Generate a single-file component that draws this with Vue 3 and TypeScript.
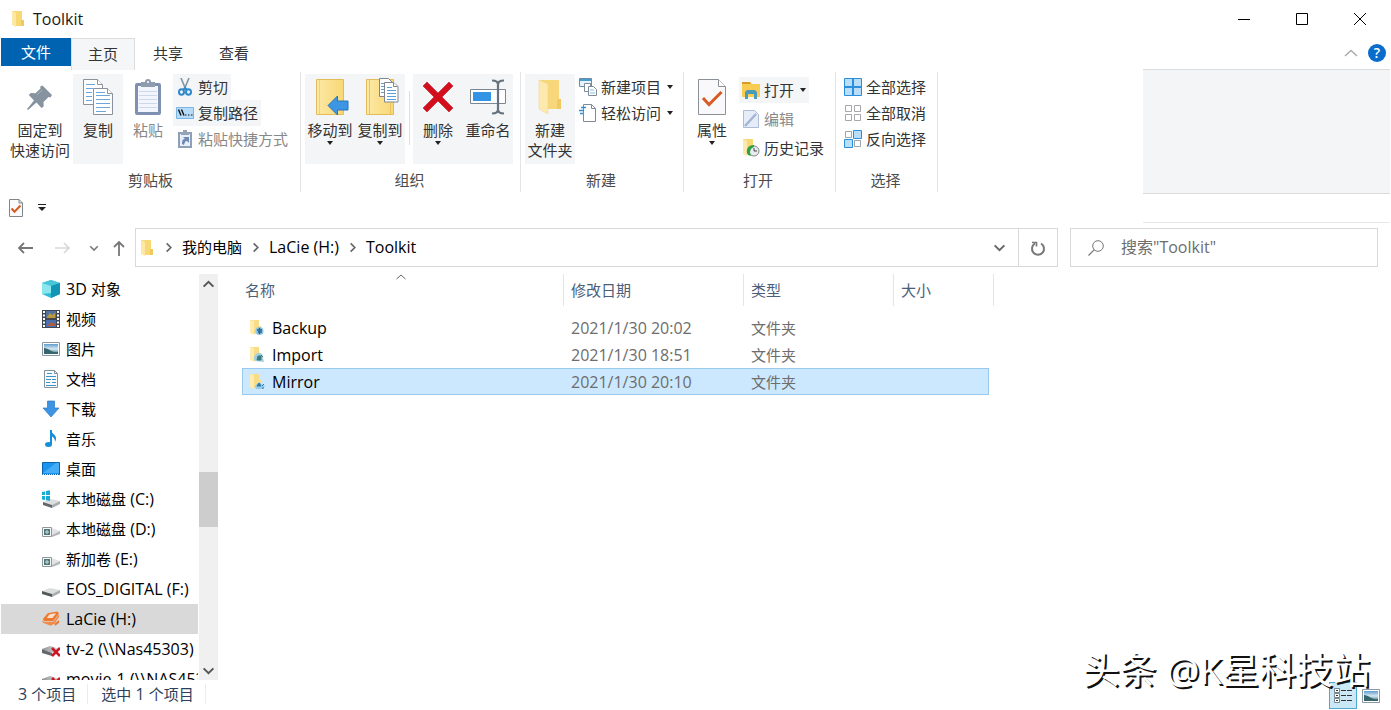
<script setup lang="ts">
import { ref } from 'vue'

interface Place { icon: string; name: string }
interface Row { name: string; date: string; kind: string; badge: string }

const tabs = ['共享', '查看']
const places: Place[] = [
  { icon: 'cube', name: '3D 对象' },
  { icon: 'film', name: '视频' },
  { icon: 'photo', name: '图片' },
  { icon: 'doc', name: '文档' },
  { icon: 'down', name: '下载' },
  { icon: 'music', name: '音乐' },
  { icon: 'desktop', name: '桌面' },
  { icon: 'disk-win', name: '本地磁盘 (C:)' },
  { icon: 'disk-lock', name: '本地磁盘 (D:)' },
  { icon: 'disk-lock', name: '新加卷 (E:)' },
  { icon: 'disk', name: 'EOS_DIGITAL (F:)' },
  { icon: 'lacie', name: 'LaCie (H:)' },
  { icon: 'disk-off', name: 'tv-2 (\\\\Nas45303)' },
  { icon: 'disk-off', name: 'movie-1 (\\\\NAS45303)' },
]
const currentPlace = ref(11)
const crumbs = ['我的电脑', 'LaCie (H:)', 'Toolkit']
const rows: Row[] = [
  { name: 'Backup', date: '2021/1/30 20:02', kind: '文件夹', badge: 'folder-a' },
  { name: 'Import', date: '2021/1/30 18:51', kind: '文件夹', badge: 'folder-b' },
  { name: 'Mirror', date: '2021/1/30 20:10', kind: '文件夹', badge: 'folder-c' },
]
const selected = ref(2)
const query = ref('')

// Splits a label into Chinese and Latin runs, which are set in different sizes.
const runs = (text: string) =>
  (text.match(/[\u2e80-\uffff]+|[^\u2e80-\uffff]+/g) ?? []).map((t) => ({ t, cjk: /[\u2e80-\uffff]/.test(t) }))
</script>

<template>
  <svg class="defs" aria-hidden="true">
    <defs>
      <linearGradient id="gold" x1="0" x2="1"><stop offset="0" stop-color="#fde9a5" /><stop offset="1" stop-color="#f8d775" /></linearGradient>
      <linearGradient id="sky" x1="0" y1="0" x2="0" y2="1"><stop offset="0" stop-color="#5f9dd0" /><stop offset=".5" stop-color="#d5e9f2" /><stop offset="1" stop-color="#2f6f7c" /></linearGradient>
      <linearGradient id="steel" x1="0" x2="1"><stop offset="0" stop-color="#8c8f91" /><stop offset="1" stop-color="#e2e4e5" /></linearGradient>
      <symbol id="folder" viewBox="0 0 16 18"><path d="M2 1h10v9h2v6H5z" fill="#f8d775" /><path d="M2 1l4 2v14l-4-2z" fill="#fde9a5" /><path d="M11 10h3v6h-3z" fill="#f2c95c" /></symbol>
      <symbol id="folder-a" viewBox="0 0 16 16"><path d="M1 0h9v6h2v8H4z" fill="#f9dc86" /><path d="M1 0l4 1v14l-4-2z" fill="#fdebb0" /><circle cx="10.500" cy="11" r="4" fill="#8cc5e6" /><path d="M8 10h5M9 12h4M10.500 8v6" stroke="#26658d" stroke-width="1.400" /></symbol>
      <symbol id="folder-b" viewBox="0 0 16 16"><path d="M1 0h9v6h2v8H4z" fill="#f9dc86" /><path d="M1 0l4 1v14l-4-2z" fill="#fdebb0" /><path d="M6 14a5 5 0 0 1 7-7l2 8z" fill="#a5d0df" /><path d="M9 9h3v4H8zM12 8l2 2" fill="#397a83" stroke="#397a83" /></symbol>
      <symbol id="folder-c" viewBox="0 0 16 16"><path d="M1 0h9v6h2v8H4z" fill="#f9dc86" /><path d="M1 0l4 1v14l-4-2z" fill="#fdebb0" /><path d="M6 12l4-4 6 4-2 3H7z" fill="#9bcbea" /><path d="M8 12l2-3 2 3zM13 12l2-2M13 14h2" fill="#2f7380" stroke="#2f7fae" /></symbol>
      <symbol id="pin" viewBox="0 0 28 28"><path d="M16.500 2.500L26 12l-1.500 2.500-2-.5-5 5 .2 4.500-2.200 1.500-5-5.500L2 27l-1-1 7-8.500L2.800 12l2-2 4.700.3 5-4.800-.3-2z" fill="#87939f" /><path d="M16 7l-5 5" stroke="#a8b2ba" /></symbol>
      <symbol id="copy" viewBox="0 0 32 38"><g fill="#fff" stroke="#8b929b"><path d="M1.500 1.500h14l5 5v20h-19z" /><path d="M15.500 1.500v5h5" /><path d="M11.500 10.500h14l5 5v21h-19z" /><path d="M25.500 10.500v5h5" /></g><path d="M4 6.500h9M4 10.500h7M4 14.500h6M4 18.500h6M4 22.500h6M14 17.500h14M14 21.500h14M14 25.500h14M14 29.500h14M14 33.500h10M14 14.500h9" stroke="#6da6d9" /></symbol>
      <symbol id="paste" viewBox="0 0 28 38"><rect x="1" y="5" width="26" height="32" rx="2" fill="#8090b0" /><path d="M4 8h20v26H4z" fill="#f2f5fb" /><path d="M5 13.500h18M5 17.500h18M5 21.500h18M5 25.500h18M5 29.500h18" stroke="#cbd7ec" /><path d="M7 4h4a3 3 0 0 1 6 0h4v5H7z" fill="#8f9cae" /><circle cx="14" cy="4" r="1" fill="#fff" /></symbol>
      <symbol id="cut" viewBox="0 0 16 18"><path d="M4 0l5 12M12 0L7 12" stroke="#8294a4" stroke-width="1.600" fill="none" /><g fill="none" stroke="#2e8acb" stroke-width="2"><ellipse cx="4.500" cy="14" rx="2.500" ry="2.800" /><ellipse cx="11.500" cy="14" rx="2.500" ry="2.800" /></g><path d="M6 12l2-2 2 2" fill="none" stroke="#2e8acb" stroke-width="2" /></symbol>
      <symbol id="path" viewBox="0 0 18 12"><path d="M.5.500h17v11H.5z" fill="#b6dbf8" stroke="#78b5e3" /><path d="M2.500 2.500l2.500 6M5.500 2.500l2.500 6" stroke="#111" stroke-width="1.400" /><path d="M9 8h1.500M12 8h1.500M15 8h1.500" stroke="#111" /></symbol>
      <symbol id="shortcut" viewBox="0 0 16 18"><path d="M2 3h12v14H2z" fill="#e9eff8" stroke="#8e9fb9" stroke-width="2" /><path d="M6 0h4v2h2v3H4V2h2z" fill="#95a3b5" /><path d="M5 14c0-4 1-5 3-5L6 7h6v6l-2-2c-2 0-2 1-3 4z" fill="#6e89b5" /></symbol>
      <symbol id="move" viewBox="0 0 34 38"><path d="M1.500 1.500h27v35h-27z" fill="url(#gold)" stroke="#e3bc58" /><path d="M4.500 2v34" stroke="#f0d27c" /><path d="M13 27.500L22.500 18v5H33v9H22.500v5z" fill="#3c96e4" stroke="#2774bd" /></symbol>
      <symbol id="copyto" viewBox="0 0 34 38"><path d="M1.500 1.500h27v35h-27z" fill="url(#gold)" stroke="#e3bc58" /><path d="M4.500 2v34M25.500 25v11" stroke="#e5c366" /><g fill="#fff" stroke="#7e8791"><path d="M14.500.500h9l4 4v14h-13z" /><path d="M19.500 4.500h9l4.500 4v15.500H19.500z" /><path d="M28.500 4.500v4h4" /></g><path d="M16 5.500h3M16 8.500h3M16 11.500h3M16 14.500h3M22 9.500h5M22 12.500h9M22 15.500h9M22 18.500h9M22 21.500h9" stroke="#5a9fd8" /></symbol>
      <symbol id="delete" viewBox="0 0 32 32"><path d="M1 5l4-4 11 11L27 1l4 4-11 11 11 11-4 4-11-11L5 31l-4-4 11-11z" fill="#d40f1d" stroke="#b50a17" stroke-width=".5" /></symbol>
      <symbol id="rename" viewBox="0 0 38 36"><path d="M1.500 10.500h35v14h-35z" fill="#fff" stroke="#7d8790" /><path d="M4 13h18v9H4z" fill="#3394e6" /><path d="M29 4v28M23 1.500c4 0 6 1 6 4 0-3 2-4 6-4M23 34.500c4 0 6-1 6-4 0 3 2 4 6 4" fill="none" stroke="#65717c" stroke-width="2.200" /></symbol>
      <symbol id="newfolder" viewBox="0 0 26 36"><path d="M2 1h20v19h2v10H8z" fill="#f7d77a" /><path d="M2 1l9 4v30l-9-5z" fill="#fde9ad" stroke="#f0d386" stroke-width=".5" /><path d="M20 20h4v10h-4z" fill="#f2c862" /></symbol>
      <symbol id="newitem" viewBox="0 0 18 18"><path d="M.5.500h12v8H.5z" fill="#e8f4fd" stroke="#6d8ca2" /><path d="M1 1h11v2H1z" fill="#4b9dc9" /><g fill="#fff" stroke="#7e8c97"><path d="M5.500 5.500h6v8h-6z" /><path d="M9.500 8.500h5l3 3v6h-8z" /></g><path d="M11 12h4M11 15h5" stroke="#8abbe5" /></symbol>
      <symbol id="access" viewBox="0 0 18 18"><path d="M4.500.500h8l4 4v13h-12z" fill="#fff" stroke="#818a93" /><path d="M12.500.500v4h4" fill="none" stroke="#818a93" /><path d="M2 3.500h5M0 6.500h5M1 9.500h3" stroke="#2e8cd3" stroke-width="1.500" /></symbol>
      <symbol id="props" viewBox="0 0 28 36"><path d="M.5.500h20l7 7v28H.5z" fill="#f9f9fb" stroke="#8b9097" /><path d="M20.500.500v7h7" fill="#fff" stroke="#8b9097" /><path d="M5 19l6 6.500L23.500 13" fill="none" stroke="#d85a25" stroke-width="3" /></symbol>
      <symbol id="open" viewBox="0 0 18 18"><path d="M0 1h8l2 2h8v13H0z" fill="#f8cc52" /><path d="M0 1h8l1 2H0z" fill="#d99b22" /><path d="M3 18v-7l2-2h8l2 2v7h-3v-5H6v5z" fill="#4b9bb8" /></symbol>
      <symbol id="edit" viewBox="0 0 18 18"><path d="M1.500.500h11l4 4v13h-15z" fill="#e6edf8" stroke="#aebdd6" /><path d="M3 16L14 4" stroke="#a3b6d3" stroke-width="2.500" /></symbol>
      <symbol id="history" viewBox="0 0 18 18"><path d="M1 0h10v15H4z" fill="#f8d775" /><path d="M1 0l4 2v15l-4-2z" fill="#fde9ad" /><circle cx="12" cy="12" r="5" fill="#e9ecee" stroke="#7f898f" /><path d="M12 9v3h3" fill="none" stroke="#444" /><path d="M12 6c-6 0-9 5-6 10l3 1-1-3c0-3 1-5 4-6z" fill="#2fa044" /></symbol>
      <symbol id="all" viewBox="0 0 18 18"><path d="M.5.500h17v17H.5z" fill="#b9def9" stroke="#2d8fdc" /><path d="M9 0v18M0 9h18" stroke="#2d8fdc" stroke-width="2" /></symbol>
      <symbol id="none" viewBox="0 0 18 18"><path d="M1.500 1.500h6v6h-6zM10.500 1.500h6v6h-6zM1.500 10.500h6v6h-6zM10.500 10.500h6v6h-6z" fill="#fff" stroke="#a5a7aa" /></symbol>
      <symbol id="invert" viewBox="0 0 18 18"><path d="M1.500 1.500h6v6h-6zM10.500 10.500h6v6h-6z" fill="#fff" stroke="#9aa4ab" /><path d="M9.500.500h8v8h-8zM.5 9.500h8v8h-8z" fill="#b9def9" stroke="#2d8fdc" /></symbol>
      <symbol id="cube" viewBox="0 0 18 18"><path d="M0 3l9-3 9 3v11l-9 4-9-4z" fill="#30bcd4" /><path d="M0 3l9-3 9 3-9 3z" fill="#48c6d8" /><path d="M9 6l9-3v11l-9 4z" fill="#1294b5" /><path d="M0 3l9 3v7l-9 1z" fill="#8ce6ee" /></symbol>
      <symbol id="film" viewBox="0 0 18 18"><path d="M0 0h18v18H0z" fill="#424650" /><path d="M4 1h10v7H4z" fill="#5272a4" /><path d="M4 10h10v7H4z" fill="#486fae" /><path d="M5 7l3-4 2 2 3-2v5H5z" fill="#b99a3f" /><path d="M5 16l4-4 4 2v2z" fill="#b05c45" /><path d="M2 1v16M16 1v16" stroke="#fff" stroke-width="2" stroke-dasharray="2 1.500" /></symbol>
      <symbol id="photo" viewBox="0 0 18 14"><path d="M.5.500h17v13H.5z" fill="#fff" stroke="#8a98a4" /><path d="M2 2h14v10H2z" fill="url(#sky)" /><path d="M2 6c5 0 7 5 14 4v2H2z" fill="#37656d" /></symbol>
      <symbol id="doc" viewBox="0 0 18 18"><path d="M2.500.500h10l3 3v14h-13z" fill="#f7fbfd" stroke="#84929c" /><path d="M12.500.500v3h3" fill="none" stroke="#84929c" /><path d="M4 6.500h10M4 9.500h5M10 9.500h4M4 12.500h4M10 12.500h4M4 15.500h10M5 3.500h5" stroke="#3c94c6" stroke-width="1.200" /></symbol>
      <symbol id="down" viewBox="0 0 18 18"><path d="M5.500 1h7v7H17l-8 9-8-9h4.500z" fill="#3d94e4" stroke="#2c78be" stroke-width=".7" /></symbol>
      <symbol id="music" viewBox="0 0 18 18"><path d="M9 0v14" stroke="#168fd8" stroke-width="2" /><ellipse cx="6.500" cy="14.500" rx="3.500" ry="2.500" fill="#168fd8" /><path d="M9 0c0 4 8 5 4 12 0-4-2-5-4-6z" fill="#168fd8" /></symbol>
      <symbol id="desktop" viewBox="0 0 18 14"><path d="M.5.500h17v12H.5z" fill="#1b94ef" stroke="#0b65ae" /><path d="M1 11L14 1h3v10z" fill="#45acf6" /><path d="M1 12.500h16" stroke="#bfe3ff" stroke-dasharray="1 1" /></symbol>
      <symbol id="disk" viewBox="0 0 18 18"><path d="M0 11l8-3 10 2-8 4z" fill="#dddfdf" /><path d="M0 11l10 3v3L0 14z" fill="#53585a" /><path d="M10 14l8-4v3l-8 4z" fill="#a9adae" /></symbol>
      <symbol id="disk-win" viewBox="0 0 18 18"><path d="M1 12l8-3 9 2-8 4z" fill="#dddfdf" /><path d="M1 12l9 3v3l-9-3z" fill="#61676a" /><path d="M10 15l8-4v3l-8 4z" fill="#a9adae" /><path d="M0 2l3-.5V5H0zM4 1l4-.7V5H4zM0 6h3v4L0 9.500zM4 6h4v5l-4-.7z" fill="#18acd4" /></symbol>
      <symbol id="disk-lock" viewBox="0 0 18 18"><path d="M3 11l7-3 8 3-8 4z" fill="#e2e4e5" /><path d="M10 15l8-4v3l-8 3z" fill="#b5b8ba" /><path d="M.5 7.500h9v9h-9z" fill="#f6f8f8" stroke="#8e979b" /><path d="M2 9h6v6H2z" fill="#517779" /><path d="M3 12h4M5 10v4" stroke="#c5e3e0" /></symbol>
      <symbol id="lacie" viewBox="0 0 19 18"><path d="M1 9l5-6 10-2 2 2-6 8H2z" fill="#ee7830" /><path d="M5 8l3-4 7-1-4 5z" fill="#ffe1cb" /><path d="M0 10l2 2h10l6-8v3l-5 7-4 2-8-3z" fill="#f28b49" /><path d="M13 14l5-4v3l-4 3z" fill="#ee7830" /></symbol>
      <symbol id="disk-off" viewBox="0 0 18 18"><path d="M0 9l8-3 10 3-8 4z" fill="url(#steel)" /><path d="M0 9l10 4v3L0 13z" fill="#62686b" /><path d="M10 8l8 8M18 8l-8 8" stroke="#cd1726" stroke-width="2.600" /></symbol>
      <symbol id="caret" viewBox="0 0 6 4"><path d="M0 0h6L3 4z" fill="#222" /></symbol>
      <symbol id="chev" viewBox="0 0 12 12"><path d="M1.500 4L6 8.500 10.500 4" fill="none" stroke="currentColor" stroke-width="1.800" /></symbol>
    </defs>
  </svg>

  <div class="window">
    <header class="title">
      <svg class="i16"><use href="#folder" /></svg>
      <h1>Toolkit</h1>
      <div class="sysbuttons">
        <button aria-label="最小化"><svg viewBox="0 0 12 12"><path d="M0 6.500h12" stroke="#000" /></svg></button>
        <button aria-label="最大化"><svg viewBox="0 0 12 12"><path d="M.5.500h11v11H.5z" fill="none" stroke="#000" /></svg></button>
        <button aria-label="关闭"><svg viewBox="0 0 12 12"><path d="M0 0l12 12M12 0L0 12" stroke="#000" /></svg></button>
      </div>
    </header>

    <nav class="tabs">
      <button class="file">文件</button>
      <button class="tab on">主页</button>
      <button v-for="t in tabs" :key="t" class="tab">{{ t }}</button>
      <div class="tabs-end">
        <button aria-label="折叠功能区"><svg width="14" height="8" viewBox="0 0 14 8"><path d="M1 7l6-5.500L13 7" fill="none" stroke="#aaa" stroke-width="1.400" /></svg></button>
        <button class="help" aria-label="帮助">?</button>
      </div>
    </nav>

    <section class="ribbon">
      <div class="group clip">
        <div class="tools">
          <button class="big wide"><span class="pic"><svg width="28" height="28"><use href="#pin" /></svg></span><span>固定到</span><span>快速访问</span></button>
          <button class="big tint"><span class="pic"><svg width="32" height="38"><use href="#copy" /></svg></span><span>复制</span></button>
          <button class="big off"><span class="pic"><svg width="28" height="38"><use href="#paste" /></svg></span><span>粘贴</span></button>
          <div class="stack">
            <button class="small tint"><svg width="16" height="18"><use href="#cut" /></svg>剪切</button>
            <button class="small tint"><svg width="18" height="12"><use href="#path" /></svg>复制路径</button>
            <button class="small off"><svg width="16" height="18"><use href="#shortcut" /></svg>粘贴快捷方式</button>
          </div>
        </div>
        <div class="caption">剪贴板</div>
      </div>
      <div class="group org">
        <div class="tools">
          <button class="big tint"><span class="pic shift"><svg width="34" height="38"><use href="#move" /></svg></span><span>移动到</span><svg class="caret"><use href="#caret" /></svg></button>
          <button class="big tint"><span class="pic shift"><svg width="34" height="38"><use href="#copyto" /></svg></span><span>复制到</span><svg class="caret"><use href="#caret" /></svg></button>
          <i class="split"></i>
          <button class="big tint"><span class="pic"><svg width="32" height="32"><use href="#delete" /></svg></span><span>删除</span><svg class="caret"><use href="#caret" /></svg></button>
          <button class="big tint"><span class="pic"><svg width="38" height="36"><use href="#rename" /></svg></span><span>重命名</span></button>
        </div>
        <div class="caption">组织</div>
      </div>
      <div class="group make">
        <div class="tools">
          <button class="big tint"><span class="pic"><svg width="26" height="36"><use href="#newfolder" /></svg></span><span>新建</span><span>文件夹</span></button>
          <div class="stack">
            <button class="small"><svg width="18" height="18"><use href="#newitem" /></svg>新建项目<svg class="caret"><use href="#caret" /></svg></button>
            <button class="small"><svg width="18" height="18"><use href="#access" /></svg>轻松访问<svg class="caret"><use href="#caret" /></svg></button>
          </div>
        </div>
        <div class="caption">新建</div>
      </div>
      <div class="group view">
        <div class="tools">
          <button class="big"><span class="pic"><svg width="28" height="36"><use href="#props" /></svg></span><span>属性</span><svg class="caret"><use href="#caret" /></svg></button>
          <div class="stack loose">
            <button class="small tint"><svg width="18" height="18"><use href="#open" /></svg>打开<svg class="caret"><use href="#caret" /></svg></button>
            <button class="small off"><svg width="18" height="18"><use href="#edit" /></svg>编辑</button>
            <button class="small"><svg width="18" height="18"><use href="#history" /></svg>历史记录</button>
          </div>
        </div>
        <div class="caption">打开</div>
      </div>
      <div class="group pick">
        <div class="tools">
          <div class="stack">
            <button class="small"><svg width="18" height="18"><use href="#all" /></svg>全部选择</button>
            <button class="small"><svg width="18" height="18"><use href="#none" /></svg>全部取消</button>
            <button class="small"><svg width="18" height="18"><use href="#invert" /></svg>反向选择</button>
          </div>
        </div>
        <div class="caption">选择</div>
      </div>
      <div class="blank"></div>
    </section>

    <div class="quick">
      <button aria-label="属性"><svg width="14" height="18" viewBox="0 0 28 36"><path d="M1 1h19l7 7v27H1z" fill="#fafafa" stroke="#7f858c" stroke-width="2" /><path d="M20 1v7h7" fill="none" stroke="#7f858c" stroke-width="2" /><path d="M5 19l6 6.500L23 13" fill="none" stroke="#d85a25" stroke-width="4" /></svg></button>
      <button aria-label="自定义快速访问工具栏"><svg width="8" height="7" viewBox="0 0 8 7"><path d="M0 .5h8" stroke="#222" /><path d="M0 3h8L4 7z" fill="#222" /></svg></button>
      <div class="rule"></div>
    </div>

    <div class="address">
      <div class="history">
        <button aria-label="后退"><svg width="16" height="14" viewBox="0 0 16 14"><path d="M16 7H2M7 2L2 7l5 5" fill="none" stroke="#777" stroke-width="1.800" /></svg></button>
        <button aria-label="前进" disabled><svg width="16" height="14" viewBox="0 0 16 14"><path d="M0 7h14M9 2l5 5-5 5" fill="none" stroke="#d8d8d8" stroke-width="1.600" /></svg></button>
        <button aria-label="最近浏览的位置"><svg width="10" height="10"><use href="#chev" /></svg></button>
        <button aria-label="上移"><svg width="14" height="16" viewBox="0 0 14 16"><path d="M7 16V2M2 7l5-5 5 5" fill="none" stroke="#777" stroke-width="1.800" /></svg></button>
      </div>
      <div class="path">
        <svg class="i16"><use href="#folder" /></svg>
        <template v-for="c in crumbs" :key="c">
          <svg class="sep"><use href="#chev" /></svg>
          <button class="crumb"><span v-for="r in runs(c)" :key="r.t" :class="{ cjk: r.cjk }">{{ r.t }}</span></button>
        </template>
        <button class="drop" aria-label="以前的位置"><svg width="13" height="13"><use href="#chev" /></svg></button>
        <button class="reload" aria-label="刷新"><svg width="16" height="16" viewBox="0 0 16 16"><path d="M11 3.500A6 6 0 1 1 5 3.500" fill="none" stroke="#777" stroke-width="2" /><path d="M6.500 6.500v-4H2" fill="none" stroke="#777" stroke-width="1.600" /></svg></button>
      </div>
      <label class="search">
        <svg width="16" height="16" viewBox="0 0 16 16"><circle cx="10" cy="6" r="5.300" fill="none" stroke="#777" /><path d="M6.300 9.700L.5 15.500" stroke="#777" stroke-width="1.200" /></svg>
        <input v-model="query" type="search" placeholder="搜索&quot;Toolkit&quot;" aria-label="搜索 Toolkit" />
      </label>
    </div>

    <main class="body">
      <nav class="side">
        <ul>
          <li v-for="(p, i) in places" :key="p.name">
            <button :class="{ on: i === currentPlace }" @click="currentPlace = i">
              <svg class="i18"><use :href="'#' + p.icon" /></svg>
              <span><span v-for="r in runs(p.name)" :key="r.t" :class="{ cjk: r.cjk }">{{ r.t }}</span></span>
            </button>
          </li>
        </ul>
        <div class="scroll">
          <button aria-label="向上滚动"><svg class="flip" width="13" height="13"><use href="#chev" /></svg></button>
          <div class="track"><div class="thumb"></div></div>
          <button aria-label="向下滚动"><svg width="13" height="13"><use href="#chev" /></svg></button>
        </div>
      </nav>
      <section class="files">
        <table>
          <colgroup><col class="c1" /><col class="c2" /><col class="c3" /><col class="c4" /><col class="c5" /></colgroup>
          <thead>
            <tr>
              <th><div>名称<svg class="sort" viewBox="0 0 10 6"><path d="M.5 5L5 1l4.500 4" fill="none" stroke="#666" /></svg></div></th>
              <th><div>修改日期</div></th>
              <th><div>类型</div></th>
              <th colspan="2"><div>大小</div></th>
            </tr>
          </thead>
          <tbody>
            <tr v-for="(r, i) in rows" :key="r.name" :class="{ on: i === selected }" @click="selected = i">
              <td><div class="name"><svg class="i16"><use :href="'#' + r.badge" /></svg>{{ r.name }}</div></td>
              <td>{{ r.date }}</td>
              <td class="cjk">{{ r.kind }}</td>
              <td></td>
            </tr>
          </tbody>
        </table>
      </section>
    </main>

    <footer class="status">
      <span class="count"><span v-for="(r, i) in runs('3 个项目')" :key="i" :class="{ cjk: r.cjk }">{{ r.t }}</span></span>
      <span class="count"><span v-for="(r, i) in runs('选中 1 个项目')" :key="i" :class="{ cjk: r.cjk }">{{ r.t }}</span></span>
      <div class="modes">
        <button class="on" aria-label="详细信息"><svg width="20" height="18" viewBox="0 0 20 18"><g fill="#fff" stroke="#77858e"><path d="M1.500 1.500h5v4h-5zM1.500 6.500h5v4h-5zM1.500 11.500h5v4h-5z" /></g><path d="M3 3.500h2M3 8.500h2M3 13.500h2M8 3.500h5M14 3.500h5M8 8.500h5M14 8.500h5M8 13.500h5M14 13.500h5" stroke="#333" /></svg></button>
        <button aria-label="大缩略图"><svg width="18" height="14"><use href="#photo" /></svg></button>
      </div>
    </footer>
    <div class="mark">头条 @K星科技站</div>
  </div>
</template>

<style>
html, body { margin: 0; background: #fff; }
</style>

<style scoped>
* { box-sizing: border-box; }
.defs { position: absolute; width: 0; height: 0; }
.window { position: relative; height: 100vh; display: flex; flex-direction: column; overflow: hidden; background: #fff; color: #1a1a1a; font: 16px/20px "Open Sans", "Noto Sans CJK SC", sans-serif; }
button { display: flex; align-items: center; justify-content: center; border: 0; padding: 0; margin: 0; background: none; color: inherit; font: inherit; white-space: nowrap; }
svg { flex: none; display: block; }
.cjk { font-size: 15px; }
.i16 { width: 16px; height: 18px; }
.i18 { width: 18px; height: 18px; }
.caret { width: 6px; height: 4px; }

.title { height: 38px; display: flex; align-items: center; padding-left: 10px; }
.title h1 { margin: 0 0 0 7px; font: inherit; }
.sysbuttons { margin: 0 2px 0 auto; display: flex; }
.sysbuttons button { width: 58px; height: 38px; }
.sysbuttons svg { width: 12px; height: 12px; }

.tabs { height: 32px; display: flex; align-items: flex-start; padding-left: 1px; font-size: 15px; color: #333; }
.file { width: 70px; height: 28px; background: #0063b1; color: #fff; }
.tab { width: 66px; height: 32px; padding-bottom: 2px; }
.tab.on { width: 64px; border: 1px solid #dcdcdc; border-bottom: 0; background: #f5f6f7; }
.tabs-end { margin-left: auto; display: flex; align-items: center; gap: 10px; height: 30px; padding-right: 5px; }
.help { width: 18px; height: 18px; border-radius: 50%; background: #0a6ccb; color: #fff; font-size: 14px; font-weight: 600; }

.ribbon { display: flex; height: 124px; font-size: 15px; color: #333; }
.group { display: flex; flex-direction: column; justify-content: space-between; height: 120px; margin-top: 2px; padding-top: 2px; border-right: 1px solid #e3e4e6; flex: none; }
.tools { display: flex; height: 90px; }
.caption { height: 22px; line-height: 20px; padding-right: 6px; text-align: center; color: #4b4b4b; }
.clip { width: 301px; padding-left: 7px; }
.org { width: 220px; padding-left: 4px; }
.make { width: 163px; padding-left: 4px; }
.view { width: 152px; padding-left: 3px; }
.pick { width: 102px; }
.pick .caption { padding-right: 2px; }
.big { width: 50px; height: 90px; flex-direction: column; justify-content: flex-start; }
.big.wide { width: 66px; }
.big span { height: 20px; }
.big .pic { display: flex; align-items: center; height: 46px; }
.big .shift { padding-left: 4px; }
.big .caret { margin-top: 1px; }
.tint { background: #f4f5f7; }
.off { color: #888; }
.stack { display: flex; flex-direction: column; align-items: flex-start; }
.big + .stack { margin-left: 1px; }
.clip .big + .stack { margin-left: 0; }
.small { height: 26px; gap: 4px; padding: 0 3px; }
.small svg:first-child { width: 18px; }
.small .caret { margin-left: 2px; }
.loose { gap: 3px; padding-top: 3px; }
.view .big + .loose { margin-left: 2px; }
.pick .small { padding-left: 8px; }
.split { width: 1px; height: 54px; margin: 17px 3px 0 4px; background: #dcdee0; }
.blank { width: 247px; margin: -1px 1px 0 auto; height: 125px; background: #f4f5f7; border: solid #dadbdc; border-width: 1px 0; }

.quick { display: flex; align-items: center; height: 29px; padding-left: 9px; gap: 15px; }
.quick button { padding-bottom: 2px; }
.quick .rule { align-self: flex-end; width: 247px; height: 1px; margin-left: auto; margin-right: 1px; background: #e8e8e8; }

.address { display: flex; height: 39px; margin: 5px 13px 7px 0; }
.history { display: flex; align-items: center; width: 135px; padding: 0 9px 0 17px; justify-content: space-between; color: #777; }
.history button:nth-child(2) { margin-left: 9px; }
.history button:nth-child(3) { margin-left: 4px; }
.path { flex: 1; display: flex; align-items: center; border: 1px solid #d9d9d9; padding: 0 0 0 3px; color: #000; }
.sep { width: 11px; height: 11px; margin: 0 8px; transform: rotate(-90deg); color: #666; }
.crumb { white-space: pre; padding-bottom: 2px; }
.drop { width: 37px; height: 37px; margin-left: auto; color: #666; }
.reload { width: 39px; height: 37px; border-left: 1px solid #d9d9d9; }
.search { width: 308px; margin-left: 12px; display: flex; align-items: center; border: 1px solid #d9d9d9; padding-left: 17px; gap: 17px; }
.search input { flex: 1; min-width: 0; border: 0; outline: 0; padding: 0 0 2px; background: none; font: inherit; color: #222; }
.search input::placeholder { color: #6d6d6d; opacity: 1; }

.body { flex: 1; min-height: 0; display: flex; }
.side { width: 218px; display: flex; overflow: hidden; }
.side ul { flex: 1; min-width: 0; margin: 0; padding: 0 1px; list-style: none; overflow: hidden; }
.side li button { width: 100%; height: 30px; justify-content: flex-start; gap: 6px; padding-left: 41px; overflow: hidden; color: #000; white-space: pre; }
.side li button.on { background: #d9d9d9; }
.scroll { width: 19px; display: flex; flex-direction: column; background: #f0f0f0; color: #555; }
.scroll button { height: 20px; }
.flip { transform: rotate(180deg); }
.track { flex: 1; display: flex; flex-direction: column; }
.thumb { height: 15%; margin-top: 178px; background: #cdcdcd; }

.files { flex: 1; padding-left: 24px; }
table { width: 752px; table-layout: fixed; border-collapse: separate; border-spacing: 0; }
.c1 { width: 322px; }
.c2 { width: 180px; }
.c3 { width: 150px; }
.c4 { width: 95px; }
.c5 { width: 5px; }
th { height: 40px; padding: 0; vertical-align: top; text-align: left; font-weight: 400; font-size: 15px; color: #4c607a; }
th div { position: relative; height: 32px; line-height: 32px; padding-left: 7px; border-right: 1px solid #e5e5e5; }
th:first-child div { padding-left: 3px; }
.sort { position: absolute; left: 50%; top: 0; width: 10px; height: 6px; margin-left: -7px; }
td { height: 27px; padding: 0 0 0 7px; color: #6d6d6d; }
td:first-child { color: #000; }
.name { display: flex; align-items: center; gap: 7px; }
.name .i16 { height: 16px; }
.on td { background: #cce8ff; border: solid #99c9ec; border-width: 1px 0; }
.on td:first-child { border-left-width: 1px; padding-left: 6px; }
.on td:last-child { border-right-width: 1px; }

.status { display: flex; height: 30px; padding: 0 11px 0 18px; color: #2c3e5c; }
.count { display: flex; align-items: baseline; height: 20px; margin-top: 4px; padding-right: 11px; margin-right: 13px; border-right: 1px solid #ececec; white-space: pre; }
.modes { margin-left: auto; display: flex; align-items: center; gap: 5px; padding-top: 2px; height: 29px; }
.modes .on { width: 28px; height: 27px; background: #cce8f6; border: 1px solid #4ea9d1; }
.mark { position: absolute; right: 21px; bottom: 17px; font: 37px/46px "Open Sans", "Noto Sans CJK SC", sans-serif; color: #fff; text-shadow: 2px 2px 0 #111; white-space: nowrap; }
</style>
